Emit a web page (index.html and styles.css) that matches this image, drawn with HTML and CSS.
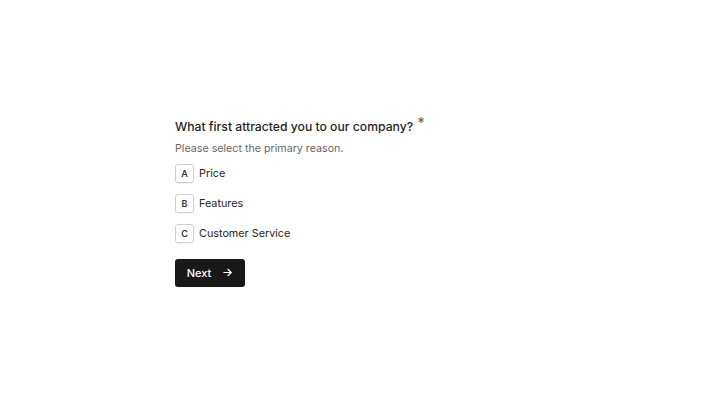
FILE: index.html
```html
<!DOCTYPE html>
<html lang="en">
<head>
    <meta charset="UTF-8">
    <meta name="viewport" content="width=device-width, initial-scale=1.0">
    <title>Survey</title>
    <link rel="stylesheet" href="styles.css">
</head>
<body>
    <div class="page">
        <form class="question">
            <h1 class="question-title">What first attracted you to our company?<span class="required">*</span></h1>
            <p class="question-hint">Please select the primary reason.</p>

            <div class="options">
                <label class="option"><span class="option-key">A</span> Price</label>
                <label class="option"><span class="option-key">B</span> Features</label>
                <label class="option"><span class="option-key">C</span> Customer Service</label>
            </div>

            <button type="button" class="next-button">
                Next
                <svg width="11" height="11" viewBox="0 0 24 24" fill="none" stroke="currentColor" stroke-width="2.6" stroke-linecap="round" stroke-linejoin="round">
                    <path d="M4 12h16"/>
                    <path d="M13 5l7 7-7 7"/>
                </svg>
            </button>
        </form>
    </div>
</body>
</html>
```

FILE: styles.css
```css
body {
    margin: 0;
    font-family: Inter, 'Noto Sans', sans-serif;
    color: #1a1a1a;
    background: #fff;
}
.page {
    height: 405px;
    display: flex;
    align-items: center;
    justify-content: center;
}
.question {
    width: 370px;
    margin-bottom: 2px;
}
.question-title {
    margin: 0;
    font-size: 12.2px;
    font-weight: 500;
    line-height: 18px;
    color: #1f1f1f;
}
.required {
    font-size: 15px;
    font-weight: 400;
    color: #666;
    position: relative;
    top: -3px;
    margin-left: 4px;
}
.question-hint {
    margin: 4px 0 0;
    font-size: 10.7px;
    line-height: 18px;
    color: #666;
}
.options {
    display: flex;
    flex-direction: column;
    gap: 11px;
    margin-top: 6px;
}
.option {
    display: flex;
    align-items: center;
    gap: 5px;
    font-size: 10.8px;
    color: #262626;
}
.option-key {
    width: 17px;
    height: 17px;
    border: 1px solid #cfcfcf;
    border-radius: 3px;
    display: flex;
    align-items: center;
    justify-content: center;
    font-size: 9px;
    font-weight: 600;
    color: #333;
    box-shadow: 0 1px 1px rgba(0, 0, 0, 0.05);
}
.next-button {
    margin-top: 16px;
    width: 70px;
    height: 28px;
    display: flex;
    align-items: center;
    justify-content: center;
    gap: 11px;
    padding: 0;
    background: #181818;
    color: #fff;
    border: none;
    border-radius: 3px;
    font-family: inherit;
    font-size: 11px;
    font-weight: 500;
    cursor: pointer;
}
```
